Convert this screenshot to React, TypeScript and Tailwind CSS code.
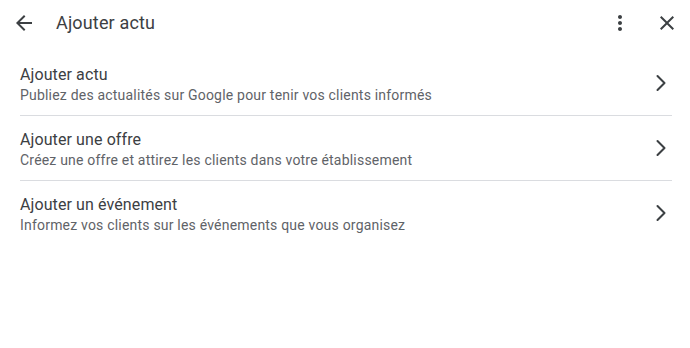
import { ChevronRight } from "lucide-react";

const items = [
  {
    title: "Ajouter actu",
    subtitle: "Publiez des actualités sur Google pour tenir vos clients informés",
  },
  {
    title: "Ajouter une offre",
    subtitle: "Créez une offre et attirez les clients dans votre établissement",
  },
  {
    title: "Ajouter un événement",
    subtitle: "Informez vos clients sur les événements que vous organisez",
  },
];

export default function App() {
  return (
    <div className="w-[690px] h-[348px] bg-white font-['Roboto',sans-serif] text-[#3c4043]">
      {/* header */}
      <div className="h-[45px] flex items-center pl-[12px] pr-[11px] pt-[1px]">
        <button className="w-6 h-6 flex items-center justify-center text-[#3c4043]">
          <svg viewBox="0 0 24 24" className="w-6 h-6" fill="currentColor">
            <path d="M20 11H7.83l5.59-5.59L12 4l-8 8 8 8 1.41-1.41L7.83 13H20v-2z" />
          </svg>
        </button>
        <h1 className="ml-[20px] text-[18px] leading-6 tracking-[0.15px] text-[#3c4043]">Ajouter actu</h1>
        <div className="ml-auto flex items-center gap-[23px]">
          <svg viewBox="0 0 24 24" className="w-6 h-6" fill="#3c4043">
            <path d="M12 8c1.1 0 2-.9 2-2s-.9-2-2-2-2 .9-2 2 .9 2 2 2zm0 2c-1.1 0-2 .9-2 2s.9 2 2 2 2-.9 2-2-.9-2-2-2zm0 6c-1.1 0-2 .9-2 2s.9 2 2 2 2-.9 2-2-.9-2-2-2z" />
          </svg>
          <svg viewBox="0 0 24 24" className="w-6 h-6" fill="#3c4043">
            <path d="M19 6.41L17.59 5 12 10.59 6.41 5 5 6.41 10.59 12 5 17.59 6.41 19 12 13.41 17.59 19 19 17.59 13.41 12z" />
          </svg>
        </div>
      </div>

      {/* list */}
      <ul className="pt-[6px] pl-[20px] pr-[18px]">
        {items.map((item, i) => (
          <li
            key={item.title}
            className={
              "flex items-center pt-[14px] pb-[10px] " +
              (i < items.length - 1 ? "border-b border-[#dadce0]" : "")
            }
          >
            <div className="flex-1 min-w-0">
              <div className="text-[16px] leading-5 tracking-[0.1px] text-[#3c4043]">{item.title}</div>
              <div className="text-[14px] leading-5 tracking-[0.2px] text-[#5f6368]">{item.subtitle}</div>
            </div>
            <ChevronRight className="w-[28px] h-[28px] text-[#3c4043] mr-[-3px] mb-[4px]" strokeWidth={1.75} />
          </li>
        ))}
      </ul>
    </div>
  );
}
